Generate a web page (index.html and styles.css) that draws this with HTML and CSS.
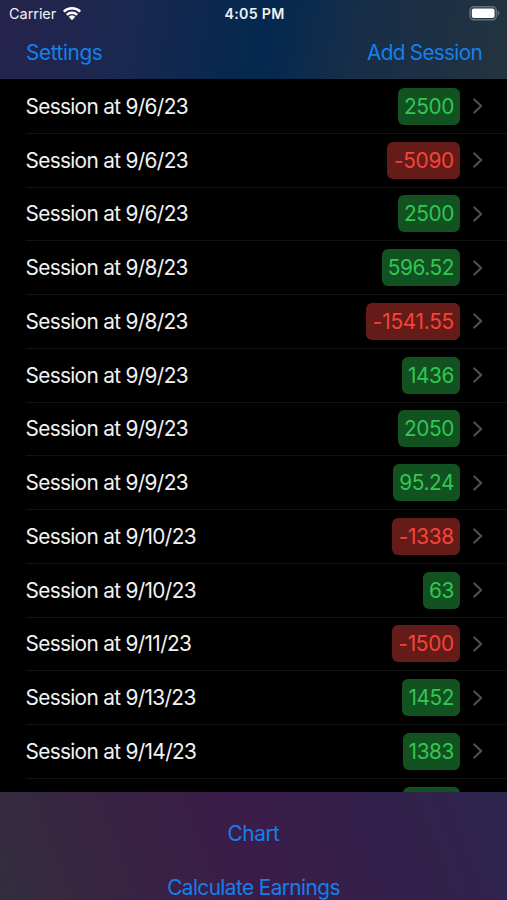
FILE: index.html
```html
<!DOCTYPE html>
<html lang="en">
<head>
    <meta charset="UTF-8">
    <meta name="viewport" content="width=device-width, initial-scale=1.0">
    <title>Sessions</title>
    <link rel="stylesheet" href="styles.css">
</head>
<body>
    <div class="app">
        <header class="header">
            <div class="status-bar">
                <div class="carrier">
                    <span>Carrier</span>
                    <svg class="wifi" viewBox="0 0 20 15">
                        <path d="M1.8 5.6a11.8 11.8 0 0 1 16.4 0M4.8 8.9a7.5 7.5 0 0 1 10.4 0" fill="none" stroke="#fff" stroke-width="2.5"/>
                        <path d="M10 14.2l-3.3-3.4a4.8 4.8 0 0 1 6.6 0z" fill="#fff"/>
                    </svg>
                </div>
                <div class="time">4:05 PM</div>
                <svg class="battery" viewBox="0 0 31 15">
                    <rect x="1" y="0.8" width="26.4" height="13" rx="4" fill="none" stroke="#66717b" stroke-width="1.5"/>
                    <rect x="2.8" y="2.6" width="22.8" height="9.4" rx="2" fill="#fff"/>
                    <path d="M28.8 4.8v4.8c2.2-.8 2.2-4 0-4.8z" fill="#66717b"/>
                </svg>
            </div>
            <nav class="nav">
                <a class="link settings">Settings</a>
                <a class="link add">Add Session</a>
            </nav>
        </header>

        <main class="list" id="sessions">
            <!-- Session rows are added here -->
        </main>

        <footer class="footer">
            <a class="link chart">Chart</a>
            <a class="link earnings">Calculate Earnings</a>
        </footer>
    </div>

    <script>
        const sessions = [
            ['9/6/23', 2500],
            ['9/6/23', -5090],
            ['9/6/23', 2500],
            ['9/8/23', 596.52],
            ['9/8/23', -1541.55],
            ['9/9/23', 1436],
            ['9/9/23', 2050],
            ['9/9/23', 95.24],
            ['9/10/23', -1338],
            ['9/10/23', 63],
            ['9/11/23', -1500],
            ['9/13/23', 1452],
            ['9/14/23', 1383]
        ];

        const list = document.getElementById('sessions');

        sessions.forEach(([date, amount]) => {
            const row = document.createElement('div');
            row.className = 'row';
            row.innerHTML = `
                <span class="title">Session at ${date}</span>
                <span class="amount ${amount < 0 ? 'loss' : 'win'}">${amount}</span>
                <svg class="chevron" viewBox="0 0 10 16"><path d="M1.3 1.4L8.2 8l-6.9 6.6"/></svg>`;
            list.appendChild(row);
        });

        // top of the next row, peeking out above the footer
        const next = document.createElement('div');
        next.className = 'row row-next';
        next.innerHTML = '<span class="amount win"></span>';
        list.appendChild(next);
    </script>
</body>
</html>
```
FILE: styles.css
```css
* {
    box-sizing: border-box;
}

body {
    margin: 0;
    background-color: #000;
    color: #f2f2f2;
    font-family: Inter, "Liberation Sans", sans-serif;
    font-size: 20.8px;
    letter-spacing: -0.4px;
}

.app {
    display: flex;
    flex-direction: column;
    height: 900px;
    overflow: hidden;
}

.header {
    flex: none;
    height: 79px;
    background: linear-gradient(100deg, #26234c 0%, #1a284f 25%, #04284f 52%, #172e48 70%, #233340 100%);
}

.status-bar {
    display: grid;
    grid-template-columns: 1fr auto 1fr;
    align-items: center;
    height: 27px;
    padding: 0 7px 0 9px;
    font-size: 14.5px;
    letter-spacing: -0.05px;
}

.carrier {
    display: flex;
    align-items: center;
    gap: 6px;
}

.wifi {
    width: 20px;
    height: 15px;
}

.time {
    font-size: 14.2px;
    font-weight: 600;
    letter-spacing: 0.3px;
}

.battery {
    justify-self: end;
    width: 31px;
    height: 15px;
}

.nav {
    display: flex;
    justify-content: space-between;
    align-items: center;
    height: 50px;
    padding: 0 25px 0 26px;
}

.link {
    color: #1480ec;
}

.add {
    letter-spacing: -0.72px;
}

.list {
    flex: none;
    height: 713px;
    padding-top: 1px;
    overflow: hidden;
}

.row {
    display: flex;
    align-items: center;
    height: 53.75px;
    margin-left: 25.5px;
    padding-right: 24.5px;
    border-bottom: 1px solid #131313;
}

.title {
    flex: 1;
    letter-spacing: -0.67px;
}

.amount {
    height: 37px;
    padding: 0 6px;
    border-radius: 6px;
    line-height: 37px;
}

.win {
    background-color: #125120;
    color: #30c753;
}

.loss {
    padding-left: 6.5px;
    background-color: #651b17;
    color: #f5443a;
    letter-spacing: -0.25px;
}

.row-next {
    justify-content: flex-end;
    padding-right: 47px;
}

.row-next .amount {
    width: 57.5px;
}

.chevron {
    width: 10px;
    height: 16px;
    margin-left: 12.5px;
    fill: none;
    stroke: #505052;
    stroke-width: 2.1;
    stroke-linecap: round;
    stroke-linejoin: round;
}

.footer {
    flex: none;
    display: flex;
    flex-direction: column;
    align-items: center;
    gap: 24px;
    height: 108px;
    padding-top: 27px;
    line-height: 30px;
    letter-spacing: -0.58px;
    background: linear-gradient(70deg, #332d3e 0%, #382343 25%, #3b1c48 48%, #34204a 70%, #2d254c 100%);
}

.chart {
    letter-spacing: -0.45px;
}
```
